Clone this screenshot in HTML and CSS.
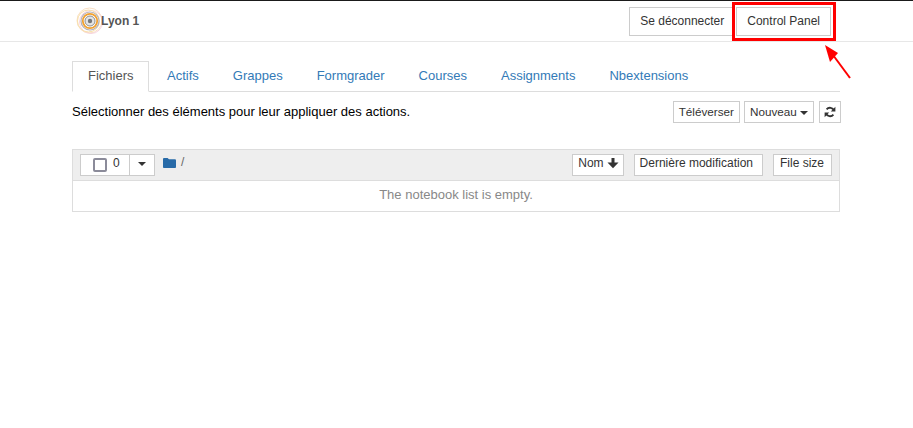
FILE: index.html
```html
<!DOCTYPE html>
<html lang="fr">
<head>
<meta charset="utf-8">
<title>Jupyter</title>
<link rel="stylesheet" href="styles.css">
</head>
<body>
<header class="topbar">
  <div class="brand">
    <svg class="logo" width="28" height="28" viewBox="0 0 28 28" aria-hidden="true">
      <circle cx="13.5" cy="13.5" r="12.5" fill="none" stroke="#f9dfc4" stroke-width="1"/>
      <circle cx="15" cy="15" r="11.5" fill="none" stroke="#f8d3de" stroke-width="1"/>
      <circle cx="12.5" cy="14" r="11" fill="none" stroke="#f9e0a8" stroke-width="1"/>
      <circle cx="14" cy="14" r="9" fill="none" stroke="#b5b2ba" stroke-width="1.2"/>
      <circle cx="14" cy="14" r="7.2" fill="none" stroke="#f0a030" stroke-width="1.8"/>
      <circle cx="14" cy="14" r="5" fill="#e4e4e4" stroke="#8f8f8f" stroke-width="1"/>
      <circle cx="14" cy="14" r="2.2" fill="#777"/>
    </svg>
    <span class="brand-name">Lyon 1</span>
  </div>
  <div class="top-actions">
    <a class="btn top-btn">Se déconnecter</a>
    <a class="btn top-btn">Control Panel</a>
  </div>
</header>
<div class="annot-box"></div>
<svg class="annot-arrow" width="30" height="36" viewBox="0 0 30 36" aria-hidden="true">
  <line x1="26" y1="34" x2="9" y2="11" stroke="#f00" stroke-width="2"/>
  <polygon points="1,1 14,9 6,18" fill="#f00"/>
</svg>
<main class="page">
  <nav class="tabs">
    <a class="tab active">Fichiers</a>
    <a class="tab">Actifs</a>
    <a class="tab">Grappes</a>
    <a class="tab">Formgrader</a>
    <a class="tab">Courses</a>
    <a class="tab">Assignments</a>
    <a class="tab">Nbextensions</a>
  </nav>
  <div class="toolbar">
    <span class="hint">Sélectionner des éléments pour leur appliquer des actions.</span>
    <div class="tool-btns">
      <a class="btn tool">Téléverser</a>
      <a class="btn tool">Nouveau <i class="caret"></i></a>
      <a class="btn tool refresh">
        <svg width="12" height="12" viewBox="0 0 12 12" aria-hidden="true">
          <path d="M10 4.6A4.3 4.3 0 0 0 2.6 3.4" fill="none" stroke="#333" stroke-width="1.8"/>
          <path d="M11.4 0.8V5.4H6.8Z" fill="#333"/>
          <path d="M2 7.4A4.3 4.3 0 0 0 9.4 8.6" fill="none" stroke="#333" stroke-width="1.8"/>
          <path d="M0.6 11.2V6.6H5.2Z" fill="#333"/>
        </svg>
      </a>
    </div>
  </div>
  <section class="list">
    <div class="list-head">
      <div class="select-group">
        <div class="select-main"><span class="checkbox"></span><span class="count">0</span></div>
        <div class="select-drop"><i class="caret dark"></i></div>
      </div>
      <svg class="folder" width="13" height="10" viewBox="0 0 13 11" preserveAspectRatio="none" aria-hidden="true">
        <path d="M0 1.2C0 .5.5 0 1.2 0H4.6L6 1.5H11.8C12.5 1.5 13 2 13 2.7V9.8C13 10.5 12.5 11 11.8 11H1.2C.5 11 0 10.5 0 9.8Z" fill="#286ba8"/>
      </svg>
      <span class="slash">/</span>
      <div class="sorts">
        <a class="btn sort name">Nom<svg width="12" height="12" viewBox="0 0 12 12" aria-hidden="true">
            <path d="M4.5 1H7.5V5.5H11.5L6 11.2L.5 5.5H4.5Z" fill="#333"/>
          </svg></a>
        <a class="btn sort modified">Dernière modification</a>
        <a class="btn sort size">File size</a>
      </div>
    </div>
    <div class="list-empty">The notebook list is empty.</div>
  </section>
</main>
</body>
</html>
```
FILE: styles.css
```css
* { box-sizing: border-box; }
html, body { margin: 0; padding: 0; }
body {
  position: relative;
  height: 428px;
  overflow: hidden;
  background: #fff;
  color: #000;
  font-family: "Liberation Sans", Arial, sans-serif;
  font-size: 13px;
  line-height: 18px;
  border-top: 1px solid #1a1a1a;
}
.btn {
  display: inline-block;
  background: #fff;
  border: 1px solid #ccc;
  color: #333;
  font-size: 12px;
  line-height: 18px;
  white-space: nowrap;
}
.topbar {
  display: flex;
  justify-content: space-between;
  align-items: center;
  height: 41px;
  padding: 0 82px 0 76px;
  border-bottom: 1px solid #e7e7e7;
}
.brand { display: flex; align-items: center; }
.brand-name {
  margin-left: -3px;
  font-size: 12px;
  font-weight: bold;
  color: #555;
}
.top-actions { display: flex; gap: 1px; }
.top-btn { height: 29px; padding: 4px 10px; }
.annot-box {
  position: absolute;
  left: 732px;
  top: 1px;
  width: 104px;
  height: 39px;
  border: 3px solid #f00;
}
.annot-arrow { position: absolute; left: 824px; top: 43px; }
.page { width: 768px; margin-left: 72px; }
.tabs {
  display: flex;
  height: 31px;
  margin-top: 19px;
  border-bottom: 1px solid #ddd;
  font-size: 13px;
}
.tab {
  height: 31px;
  padding: 5px 15px;
  margin-right: 2px;
  border: 1px solid transparent;
  color: #337ab7;
  line-height: 18px;
}
.tab.active {
  width: 77px;
  color: #555;
  background: #fff;
  border-color: #ddd #ddd #fff;
}
.toolbar {
  display: flex;
  justify-content: space-between;
  align-items: center;
  height: 22px;
  margin-top: 9px;
}
.hint { font-size: 13px; }
.tool-btns { display: flex; gap: 4px; margin-right: -1px; }
.tool { height: 22px; padding: 1px 5px; font-size: 11.7px; }
.caret {
  display: inline-block;
  width: 0;
  height: 0;
  vertical-align: middle;
  border-top: 4px solid #333;
  border-left: 4px solid transparent;
  border-right: 4px solid transparent;
}
.refresh { display: flex; align-items: center; margin-left: 1px; padding: 0 4px; }
.list { margin-top: 26px; border: 1px solid #ddd; }
.list-head {
  display: flex;
  align-items: flex-start;
  height: 31px;
  padding: 4px 7px;
  background: #eee;
  border-bottom: 1px solid #ddd;
  color: #333;
}
.select-group { display: flex; height: 22px; background: #fff; border: 1px solid #ccc; }
.select-main {
  display: flex;
  width: 49px;
  padding-left: 12px;
  border-right: 1px solid #ccc;
  font-size: 12px;
  line-height: 17px;
}
.checkbox {
  width: 14px;
  height: 14px;
  margin-top: 3px;
  border: 2px solid #8b8b9a;
  border-radius: 2px;
}
.count { margin-left: 6px; }
.select-drop { display: flex; align-items: center; justify-content: center; width: 24px; }
.select-drop .caret { margin-bottom: 3px; }
.folder { margin: 4px 0 0 8px; }
.slash { margin-left: 5px; font-size: 12px; line-height: 17px; color: #666; }
.sorts { display: flex; margin-left: auto; }
.sort { height: 22px; padding: 0 5px; line-height: 16px; }
.sort svg { margin-left: 3px; vertical-align: -2px; }
.name { padding-right: 4px; }
.modified { margin-left: 10px; padding-right: 9px; }
.size { margin-left: 10px; padding-left: 6px; padding-right: 7px; }
.list-empty {
  height: 30px;
  line-height: 27px;
  text-align: center;
  font-size: 13px;
  color: #888;
}
```
